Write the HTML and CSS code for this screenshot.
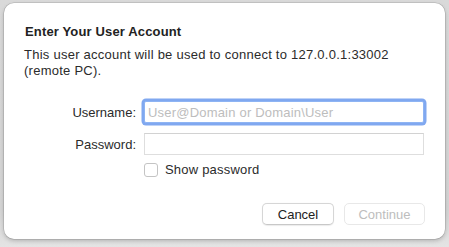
FILE: index.html
```html
<!DOCTYPE html>
<html lang="en">
<head>
    <meta charset="UTF-8">
    <title>Enter Your User Account</title>
    <link rel="stylesheet" href="styles.css">
</head>
<body>
    <div class="sheet">
        <h1 class="title">Enter Your User Account</h1>
        <p class="message">This user account will be used to connect to 127.0.0.1:33002<br>(remote PC).</p>

        <form class="account-form">
            <label for="username">Username:</label>
            <input type="text" id="username" class="field focused" placeholder="User@Domain or Domain\User">

            <label for="password">Password:</label>
            <input type="password" id="password" class="field">

            <span></span>
            <label class="check">
                <span class="box"></span>
                Show password
            </label>
        </form>

        <div class="actions">
            <button type="button" class="btn">Cancel</button>
            <button type="button" class="btn disabled">Continue</button>
        </div>
    </div>
</body>
</html>
```

FILE: styles.css
```css
* {
    margin: 0;
    padding: 0;
    box-sizing: border-box;
    font-family: 'Liberation Sans', Arial, sans-serif;
}

html, body {
    height: 100%;
}

body {
    background: linear-gradient(180deg, #d9d9d9 0%, #d4d4d4 85%, #e4e4e4 100%);
    padding: 3px 4px 8px 4px;
    overflow: hidden;
}

.sheet {
    width: 441px;
    height: 236px;
    background: #fff;
    border-radius: 10px;
    box-shadow: 0 0 0 0.5px rgba(0,0,0,0.18), 0 2px 4px rgba(0,0,0,0.2);
    padding: 21px 20px 14px 20px;
    display: flex;
    flex-direction: column;
    color: #262626;
}

.title {
    font-size: 13px;
    font-weight: 700;
    line-height: 16px;
    letter-spacing: 0.15px;
    color: #222;
    padding-left: 1px;
}

.message {
    font-size: 13px;
    line-height: 16px;
    letter-spacing: 0.25px;
    margin-top: 7px;
    color: #2b2b2b;
}

.account-form {
    display: grid;
    grid-template-columns: 112px 1fr;
    column-gap: 8px;
    row-gap: 10px;
    align-items: center;
    margin-top: 22px;
}

.account-form > label {
    text-align: right;
    font-size: 13px;
    color: #2b2b2b;
}

.field {
    height: 22px;
    width: 280px;
    border: 1px solid #dedede;
    border-top-color: #d2d2d2;
    background: #fff;
    font-size: 13px;
    letter-spacing: 0.2px;
    padding: 0 3px;
    outline: none;
    color: #222;
}

.field::placeholder {
    color: #bdbdbd;
}

.field.focused {
    border-color: #8eb4f3;
    box-shadow: 0 0 0 2.5px #80a8f0;
    border-radius: 2px;
}

.account-form .check {
    display: flex;
    align-items: center;
    gap: 7px;
    font-size: 13px;
    letter-spacing: 0.2px;
    color: #2b2b2b;
    margin-top: -3px;
}

.box {
    width: 14px;
    height: 14px;
    border: 1px solid #c4c4c4;
    border-radius: 3px;
    background: #fff;
}

.actions {
    margin-top: auto;
    display: flex;
    justify-content: flex-end;
    gap: 10px;
}

.btn {
    height: 22px;
    border: 1px solid #d6d6d6;
    border-bottom-color: #c8c8c8;
    border-radius: 5px;
    background: #fff;
    font-size: 13px;
    color: #222;
    box-shadow: 0 0.5px 1px rgba(0,0,0,0.08);
}

.btn:first-child {
    width: 72px;
}

.btn.disabled {
    width: 81px;
    color: #bdbdbd;
    border-color: #e8e8e8;
    box-shadow: none;
}
```
